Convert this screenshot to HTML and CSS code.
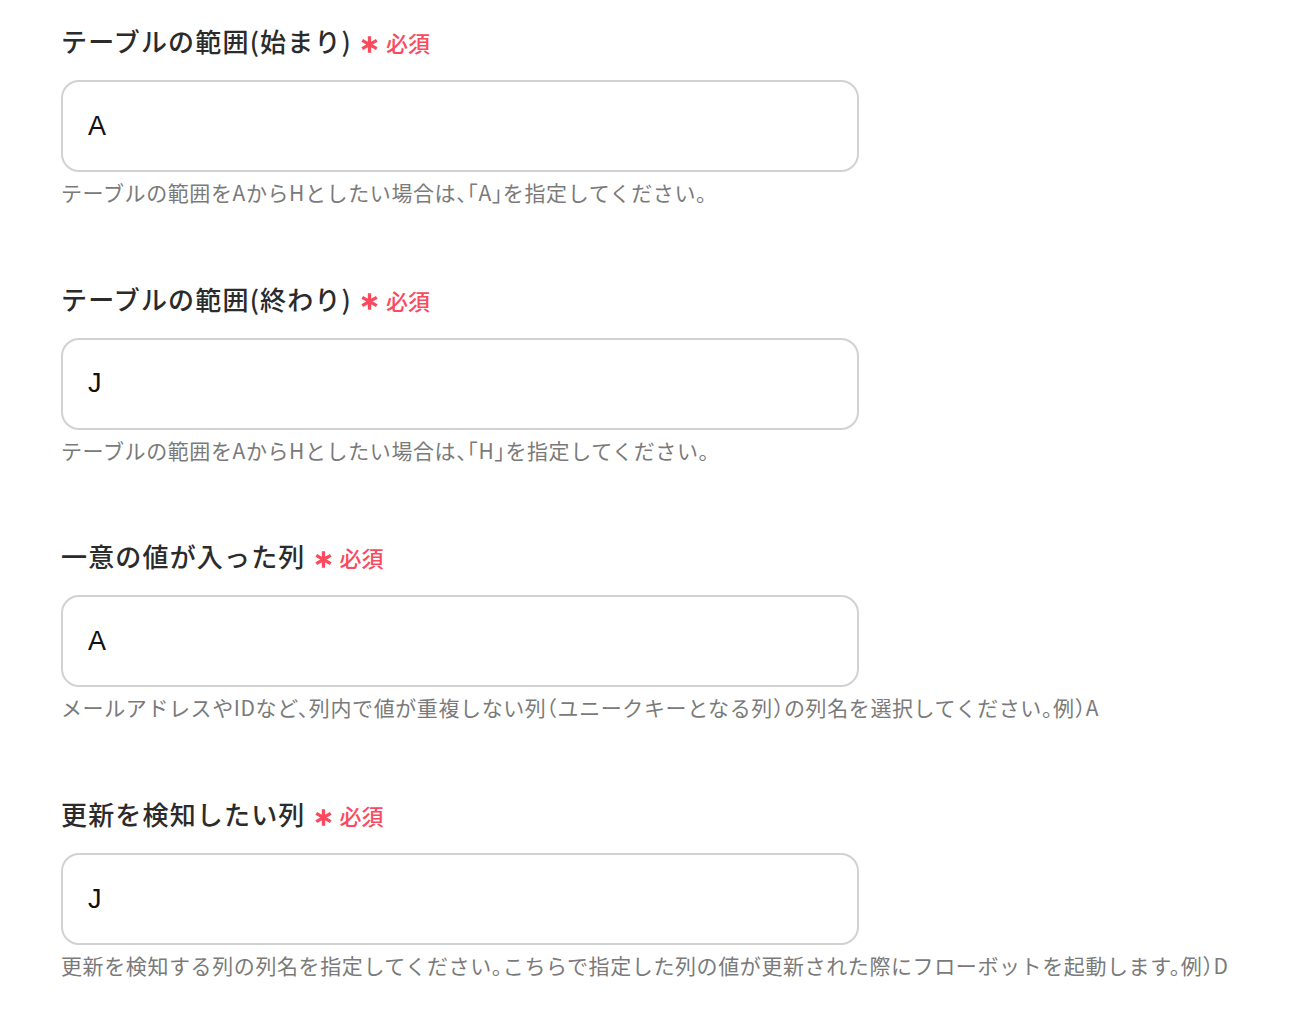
FILE: index.html
```html
<!DOCTYPE html>
<html lang="ja">
<head>
<meta charset="utf-8">
<link rel="stylesheet" href="styles.css">
</head>
<body>
<div class="form">
  <div class="field">
    <div class="label"><span class="label-text">テーブルの範囲(始まり)</span><span class="req"><svg class="ast" viewBox="0 0 16 16"><path d="M8 1v14M1.9 4.5l12.2 7M1.9 11.5l12.2-7"/></svg>必須</span></div>
    <div class="input">A</div>
    <div class="help">テーブルの範囲をAからHとしたい場合は、「A」を指定してください。</div>
  </div>
  <div class="field">
    <div class="label"><span class="label-text">テーブルの範囲(終わり)</span><span class="req"><svg class="ast" viewBox="0 0 16 16"><path d="M8 1v14M1.9 4.5l12.2 7M1.9 11.5l12.2-7"/></svg>必須</span></div>
    <div class="input">J</div>
    <div class="help">テーブルの範囲をAからHとしたい場合は、「H」を指定してください。</div>
  </div>
  <div class="field">
    <div class="label"><span class="label-text">一意の値が入った列</span><span class="req"><svg class="ast" viewBox="0 0 16 16"><path d="M8 1v14M1.9 4.5l12.2 7M1.9 11.5l12.2-7"/></svg>必須</span></div>
    <div class="input">A</div>
    <div class="help">メールアドレスやIDなど、列内で値が重複しない列（ユニークキーとなる列）の列名を選択してください。例）A</div>
  </div>
  <div class="field">
    <div class="label"><span class="label-text">更新を検知したい列</span><span class="req"><svg class="ast" viewBox="0 0 16 16"><path d="M8 1v14M1.9 4.5l12.2 7M1.9 11.5l12.2-7"/></svg>必須</span></div>
    <div class="input">J</div>
    <div class="help">更新を検知する列の列名を指定してください。こちらで指定した列の値が更新された際にフローボットを起動します。例）D</div>
  </div>
</div>
</body>
</html>
```

FILE: styles.css
```css
html, body {
  margin: 0;
  padding: 0;
  background: #ffffff;
}
body {
  font-family: "Noto Sans CJK JP", "Noto Sans", sans-serif;
  color: #2b2b2b;
}
.form {
  padding: 23px 0 0 61px;
  display: flex;
  flex-direction: column;
  gap: 73.7px;
}
.field {
  display: flex;
  flex-direction: column;
}
.label {
  display: flex;
  align-items: center;
  height: 36px;
  gap: 8px;
}
.label-text {
  font-size: 26px;
  font-weight: 500;
  letter-spacing: 0.045em;
  line-height: 36px;
  color: #2b2b2b;
}
.req {
  display: flex;
  align-items: center;
  gap: 7px;
  color: #fb4a5e;
  font-size: 22px;
  font-weight: 500;
  line-height: 36px;
  padding-top: 2px;
}
.ast {
  width: 19px;
  height: 19px;
  fill: none;
  stroke: #fb4a5e;
  stroke-width: 2.8;
  stroke-linecap: butt;
  margin-top: 4px;
}
.input {
  margin-top: 21px;
  box-sizing: border-box;
  width: 798px;
  height: 92px;
  border: 2px solid #d2d2d2;
  border-radius: 18px;
  padding: 0 25px;
  display: flex;
  align-items: center;
  font-family: "Liberation Sans", Arial, sans-serif;
  font-size: 27px;
  color: #111111;
}
.help {
  margin-top: 5px;
  font-size: 21px;
  line-height: 30px;
  color: #7a7a7a;
  letter-spacing: 0.6px;
  font-feature-settings: "halt";
  white-space: nowrap;
}
```
